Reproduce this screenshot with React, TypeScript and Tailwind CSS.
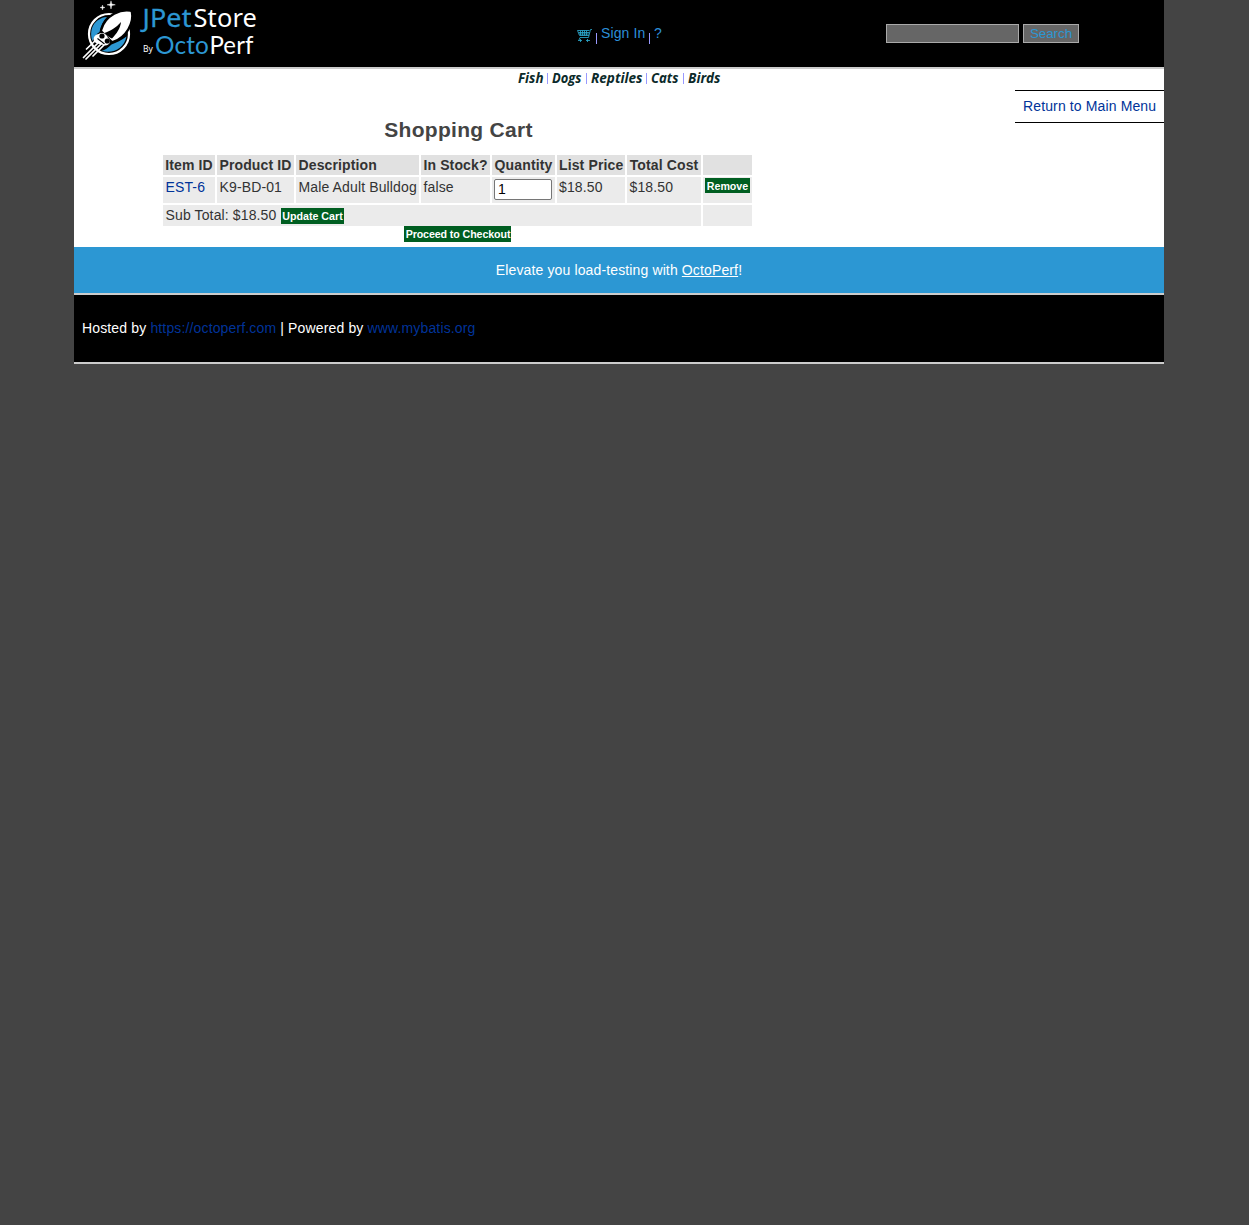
import React from "react";

const headings = ["Item ID", "Product ID", "Description", "In Stock?", "Quantity", "List Price", "Total Cost", ""];
const categories = ["Fish", "Dogs", "Reptiles", "Cats", "Birds"];
const categoryWidths = [25.5, 29.5, 51.5, 27.5, 32.5];

function Logo() {
  return (
    <svg width="190" height="64" viewBox="0 0 190 64" className="block">
      <circle cx="33" cy="34" r="20" fill="#000" stroke="#fff" strokeWidth="2.2" />
      <path d="M16.500 41C12.500 30 18 18 31 17C27 21 24.500 26 23.500 32C20 34 18 38 16.500 41Z" fill="#2c97d3" />
      <path d="M25.500 51C38 54 48 48 50.500 36.500C46 40 40 43 35.500 44.500C32 48 29 50 25.500 51Z" fill="#2c97d3" />
      <path d="M54 12C46 10 30 15 26.500 30L37 40.500C50 37 57 22 54 12Z" fill="#000" stroke="#000" strokeWidth="4.5" strokeLinejoin="round" />
      <path d="M54 12.500C46 11 31 16 27 30.500L36.500 40C49 36 56 22 54 12.500Z" fill="#fff" stroke="#fff" strokeWidth="1.6" strokeLinejoin="round" />
      <path d="M28.500 33C34 31 40 28 45 22C44.500 28 40.500 34 36 38.500C33 37.500 30.500 35.500 28.500 33Z" fill="#000" />
      <path d="M22.500 34C17 35 16 41 20 43L29 45.500C34.500 45 35.500 40.500 32 38C31 34 26 31.500 22.500 34Z" fill="#fff" />
      <circle cx="26" cy="36" r="2.600" fill="#000" />
      <circle cx="31.300" cy="41" r="2.600" fill="#000" />
      <path d="M21.500 38.500L28.500 44" stroke="#000" strokeWidth="1.100" />
      <g stroke="#fff" strokeWidth="1.7" strokeLinecap="round">
        <path d="M20 40L10.500 49" />
        <path d="M23 42L7.500 57.500" />
        <path d="M25.500 43.500L10 59" />
        <path d="M28 45L17 56" />
      </g>
      <path d="M35 .8L35.800 4L39.300 4.800L35.800 5.600L35 9L34.200 5.600L31 4.800L34.200 4Z M26.500 5L27 7L29 7.500L27 8L26.500 10L26 8L24 7.500L26 7Z" fill="#fff" stroke="#fff" strokeWidth=".4" />
      <g fontFamily="'Noto Sans', sans-serif">
        <text x="66.500" y="27" fontSize="26" fill="#2c97d3" stroke="#2c97d3" strokeWidth=".3" textLength="49" lengthAdjust="spacingAndGlyphs">JPet</text>
        <text x="117.500" y="27" fontSize="25.5" fill="#fff" textLength="63.500" lengthAdjust="spacingAndGlyphs">Store</text>
        <text x="67" y="52" fontSize="9" fill="#fff" textLength="10" lengthAdjust="spacingAndGlyphs">By</text>
      </g>
      <g fontFamily="Lato, sans-serif" fontSize="24.5">
        <text x="79" y="53.500" fill="#2c97d3" textLength="54" lengthAdjust="spacingAndGlyphs">Octo</text>
        <text x="133.500" y="53.500" fill="#fff" textLength="44" lengthAdjust="spacingAndGlyphs">Perf</text>
      </g>
    </svg>
  );
}

function CartIcon() {
  return (
    <svg width="16" height="15" viewBox="0 0 16 15" className="ml-px mt-[28px] block" fill="none">
      <path d="M15 1.500H13.500L11.500 9.500H3M.5 2.500H12.500M.5 2.500L2.500 7.500H12M1.500 4.500H12.500M2 6H12M3.500 2.500V7.500M5.500 2.500V7.500M7.500 2.500V7.500M9.500 2.500V7.500M3 9.500L2 12M1 12.500H5M9 12.500H13M3.500 11V14M10.500 11V14" stroke="#2ba6cb" strokeWidth=".85" />
    </svg>
  );
}

function Button({ children, className = "" }: { children: React.ReactNode; className?: string }) {
  return (
    <button className={"block whitespace-nowrap bg-[#005e21] text-center text-[10.67px] font-bold tracking-normal text-white " + className}>
      {children}
    </button>
  );
}

function Cell({ children, className = "" }: { children?: React.ReactNode; className?: string }) {
  return <div className={"whitespace-nowrap bg-[#ebebeb] px-[2.500px] pt-[2px] leading-4 " + className}>{children}</div>;
}

export default function App() {
  return (
    <div className="min-h-screen bg-[#444] pl-[74px] font-['Liberation_Sans',Arial,sans-serif] text-[14px] leading-4 tracking-[0.13px] text-[#333]">
      <div className="w-[1090px] bg-white">
        <header className="flex h-[69px] border-b-2 border-[#ccc] bg-black">
          <div className="w-[502px] pl-[2px]"><Logo /></div>
          <nav className="flex w-[310px] text-[#2c8fd8]">
            <CartIcon />
            <span className="ml-[3px] mt-[33px] h-[11px] w-px bg-[#9999ff]" />
            <a className="ml-1 mt-[25px] w-[45px] whitespace-nowrap">Sign In</a>
            <span className="ml-[3px] mt-[33px] h-[11px] w-px bg-[#9999ff]" />
            <a className="ml-1 mt-[25px]">?</a>
          </nav>
          <form className="flex gap-1 pt-6" onSubmit={(e) => e.preventDefault()}>
            <input aria-label="Search" className="h-[19px] w-[133px] border border-[#aaa] bg-[#666] px-1 text-white outline-none" />
            <button className="h-[19px] w-14 border border-[#aaa] bg-[#666] text-[13.333px] leading-[17px] tracking-normal text-[#2c97d3]">Search</button>
          </form>
        </header>

        <nav className="flex h-[21px] justify-center pt-[2px] tracking-normal">
          {categories.map((name, i) => (
            <React.Fragment key={name}>
              {i > 0 && <span className="mx-1 mt-[2px] h-[11px] w-px bg-[#9999ff]" />}
              <svg width={categoryWidths[i]} height="17" className="overflow-visible">
                <text x="0" y="12" fontFamily="'Open Sans', sans-serif" fontSize="13.5" fontStyle="italic" fontWeight="700" fill="#0b2a2a" textLength={categoryWidths[i]} lengthAdjust="spacingAndGlyphs">{name}</text>
              </svg>
            </React.Fragment>
          ))}
        </nav>

        <main className="flex h-[157px] justify-between">
          <section className="ml-[89px] w-[589px]">
            <h2 className="pl-[2px] pt-[28px] text-center text-[21px] font-bold leading-6 tracking-[0.3px] text-[#444]">Shopping Cart</h2>
            <div className="mt-[13px] grid grid-cols-[52px_77px_123px_69px_63px_68px_74px_49px] grid-rows-[20px_26px_21px] gap-[2px]">
              {headings.map((h, i) => (
                <Cell key={i} className="bg-[#e1e1e1]! px-[2px]! text-center font-bold">{i === 2 ? <div className="pl-[0.500px] text-left">{h}</div> : h}</Cell>
              ))}
              <Cell><a className="text-[#039]">EST-6</a></Cell>
              <Cell>K9-BD-01</Cell>
              <Cell>Male Adult Bulldog</Cell>
              <Cell>false</Cell>
              <Cell>
                <input aria-label="Quantity" defaultValue="1" className="-ml-[0.500px] block h-[21px] w-[58px] rounded-[2px] border border-[#767676] bg-white px-[3px] pb-px text-[14px] text-black" />
              </Cell>
              <Cell className="pl-[2px]!">$18.50</Cell>
              <Cell>$18.50</Cell>
              <Cell className="px-[2px]! pt-px!"><Button className="h-[15px] w-[45px] leading-[16px]">Remove</Button></Cell>
              <Cell className="col-span-7 flex">
                <span className="w-[115.500px]">Sub Total: $18.50</span>
                <Button className="mt-px h-4 w-[63px] leading-4">Update Cart</Button>
              </Cell>
              <Cell />
            </div>
            <Button className="mx-auto h-4 w-[107px] pl-px leading-4 tracking-[-0.1px]!">Proceed to Checkout</Button>
          </section>
          <aside className="h-[33px] w-[149px] border-y border-black pl-2 pt-[7px]">
            <a className="whitespace-nowrap text-[#039]">Return to Main Menu</a>
          </aside>
        </main>

        <div className="h-12 border-b-2 border-[#ccc] bg-[#2c97d3] pt-[15px] text-center text-white">
          Elevate you load-testing with <a className="underline">OctoPerf</a>!
        </div>
        <footer className="h-[69px] border-b-2 border-[#ccc] bg-black pl-2 pt-[25px] tracking-[0.145px] text-white">
          Hosted by <a className="text-[#039]">https://octoperf.com</a> | Powered by <a className="text-[#039]">www.mybatis.org</a>
        </footer>
      </div>
    </div>
  );
}
